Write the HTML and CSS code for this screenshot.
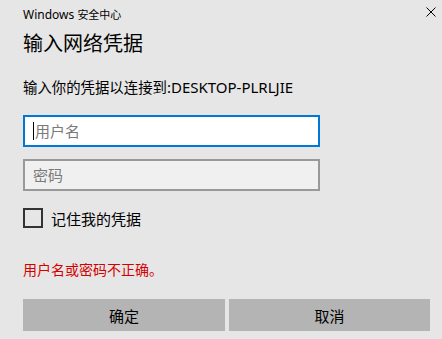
FILE: index.html
```html
<!DOCTYPE html>
<html lang="zh-CN">
<head>
    <meta charset="UTF-8">
    <meta name="viewport" content="width=device-width, initial-scale=1.0">
    <title>Windows 安全中心</title>
    <link rel="stylesheet" href="styles.css">
</head>
<body>
<div class="dialog">
    <div class="dialog-header">
        <span class="app-name">Windows <span class="cjk-small">安全中心</span></span>
        <button class="close-btn" aria-label="关闭">
            <svg width="10" height="10" viewBox="0 0 10 10">
                <path d="M0.5 0.5 L9.5 9.5 M9.5 0.5 L0.5 9.5" stroke="#000" stroke-width="1" fill="none"/>
            </svg>
        </button>
    </div>
    <h1 class="dialog-title">输入网络凭据</h1>
    <p class="dialog-subtitle">输入你的凭据以连接到<span class="host">:DESKTOP-PLRLJIE</span></p>

    <div class="field field-active">
        <span class="caret"></span>
        <span class="placeholder">用户名</span>
    </div>
    <div class="field field-idle">
        <span class="placeholder">密码</span>
    </div>

    <label class="remember">
        <span class="checkbox"></span>
        <span>记住我的凭据</span>
    </label>

    <p class="error-text">用户名或密码不正确。</p>

    <div class="dialog-buttons">
        <button class="dlg-btn">确定</button>
        <button class="dlg-btn">取消</button>
    </div>
</div>
</body>
</html>
```

FILE: styles.css
```css
body {
    margin: 0;
    background: #e6e6e6;
    font-family: "Noto Sans", "Noto Sans CJK SC", sans-serif;
    color: #000;
}

.dialog {
    width: 442px;
    height: 339px;
    padding-left: 23px;
    box-sizing: border-box;
}

.dialog-header {
    display: flex;
    align-items: center;
    justify-content: space-between;
    height: 30px;
}

.app-name {
    font-size: 12px;
    line-height: 30px;
}

.cjk-small {
    font-size: 11px;
}

.close-btn {
    border: none;
    background: none;
    padding: 0;
    width: 10px;
    height: 10px;
    margin: 0 6px 6px 0;
    display: flex;
}

.dialog-title {
    margin: 0;
    font-size: 20px;
    font-weight: normal;
    line-height: 28px;
}

.dialog-subtitle {
    margin: 19px 0 0;
    font-size: 14.4px;
    line-height: 20px;
}

.host {
    font-size: 15px;
}

.field {
    width: 297px;
    height: 32px;
    box-sizing: border-box;
    display: flex;
    align-items: center;
    padding-left: 8px;
    font-size: 15px;
}

.field-active {
    margin-top: 17px;
    border: 2px solid #0078d7;
    background: #fff;
}

.field-idle {
    margin-top: 12px;
    border: 2px solid #999;
    background: #f0f0f0;
}

.caret {
    width: 1px;
    height: 18px;
    background: #000;
    margin-right: 1px;
}

.placeholder {
    color: #7a7a7a;
    line-height: 20px;
}

.remember {
    display: flex;
    align-items: center;
    gap: 8px;
    margin-top: 17px;
    height: 20px;
    font-size: 15px;
}

.checkbox {
    width: 20px;
    height: 20px;
    box-sizing: border-box;
    border: 2px solid #333;
}

.error-text {
    margin: 32px 0 0;
    font-size: 14px;
    line-height: 20px;
    color: #d40000;
}

.dialog-buttons {
    display: grid;
    grid-template-columns: 202px 201px;
    gap: 4px;
    margin-top: 19px;
}

.dlg-btn {
    height: 32px;
    border: none;
    background: #b4b4b4;
    font-family: inherit;
    font-size: 15px;
    color: #000;
    padding: 0;
}
```
